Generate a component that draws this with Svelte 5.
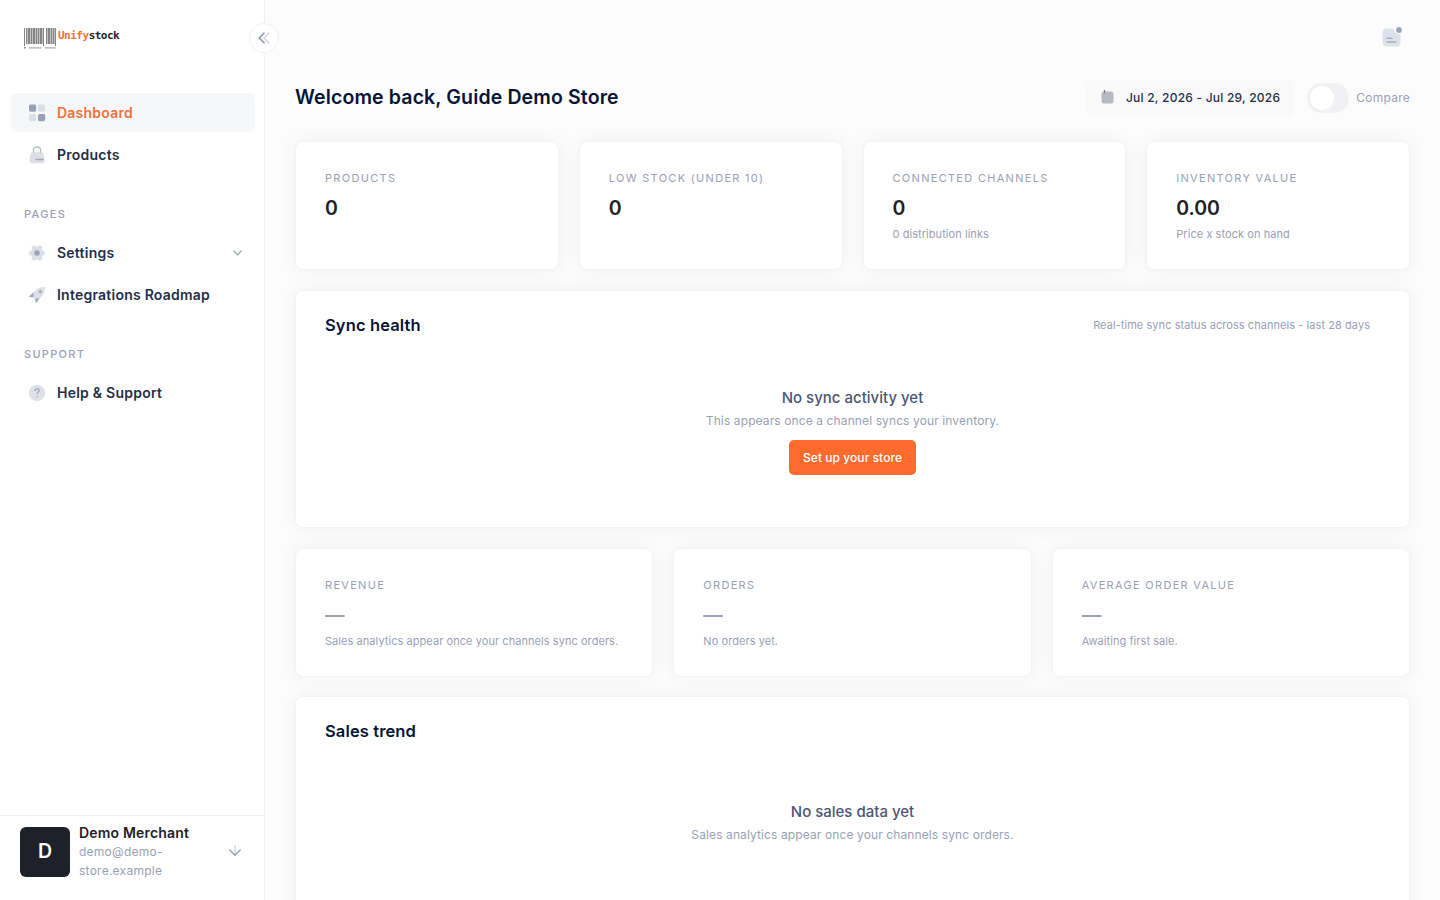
<script lang="ts">
    const menu = [
        {
            heading: "",
            items: [
                { label: "Dashboard", icon: "grid", active: true },
                { label: "Products", icon: "lock" },
            ],
        },
        {
            heading: "Pages",
            items: [
                { label: "Settings", icon: "gear", expandable: true },
                { label: "Integrations Roadmap", icon: "rocket" },
            ],
        },
        {
            heading: "Support",
            items: [{ label: "Help & Support", icon: "help" }],
        },
    ];

    const stats = [
        { label: "Products", value: "0", note: "" },
        { label: "Low stock (under 10)", value: "0", note: "" },
        { label: "Connected channels", value: "0", note: "0 distribution links" },
        { label: "Inventory value", value: "0.00", note: "Price x stock on hand" },
    ];

    const sales = [
        { label: "Revenue", note: "Sales analytics appear once your channels sync orders." },
        { label: "Orders", note: "No orders yet." },
        { label: "Average order value", note: "Awaiting first sale." },
    ];

    // x offset and width of each bar in the logo
    const bars = [
        [0, 1], [2, 1.5], [4, 2.5], [7, 1.5], [9, 2.5], [12, 1.5], [14, 1.5], [16, 2.5],
        [19, 1], [22, 1.5], [24, 2.5], [27, 1.5], [29, 1.5], [31, 1],
    ];

    let compare = false;
</script>

<div class="layout">
    <aside class="sidebar">
        <div class="logo">
            <svg width="34" height="22" viewBox="0 0 34 22" fill="#858588">
                {#each bars as [x, w], i}
                    <rect {x} y="0" width={w} height={i === 0 || i === 8 || i === 13 ? 18 : 16} />
                {/each}
                <g fill="#929295">
                    <rect x="0" y="19" width="2" height="1.5" />
                    <path d="M5 19.8h12M21 19.8h11" stroke="#929295" stroke-width="1.3" stroke-dasharray="1.5 .6" />
                </g>
            </svg>
            <span class="wordmark"><span>Unify</span>stock</span>
        </div>

        <button class="collapse" aria-label="Collapse sidebar">
            <svg width="12" height="12" viewBox="0 0 12 12" fill="none" stroke-width="1.6" stroke-linecap="round" stroke-linejoin="round">
                <path d="M10.7 1.2 6 6l4.7 4.8" stroke="#d8dae5" />
                <path d="M6 1.2 1.2 6 6 10.8" stroke="#8e92ad" />
            </svg>
        </button>

        <nav>
            {#each menu as group}
                {#if group.heading}
                    <div class="heading">{group.heading}</div>
                {/if}
                {#each group.items as item}
                    <a href="#{item.icon}" class="item" class:active={item.active}>
                        <svg width="18" height="18" viewBox="0 0 18 18">
                            {#if item.icon === "grid"}
                                <rect x="1" y="0.5" width="7.2" height="7.2" rx="1.6" fill="#99a1b7" />
                                <rect x="10" y="0.5" width="7.2" height="7.2" rx="1.6" fill="#dcdfe7" />
                                <rect x="1" y="10" width="7.2" height="7.2" rx="1.6" fill="#dcdfe7" />
                                <rect x="10" y="10" width="7.2" height="7.2" rx="1.6" fill="#99a1b7" />
                            {:else if item.icon === "lock"}
                                <path d="M4.6 6.2h8.8q1.6 0 2 1.8l1.1 6.2q.3 3-2.4 3H3.9q-2.7 0-2.4-3L2.6 8q.4-1.8 2-1.8z" fill="#dddfe6" />
                                <path d="M5.5 6.7V4q0-3 3.5-3t3.5 3v2.7" fill="none" stroke="#b5bac9" stroke-width="1.3" />
                                <path d="M7.8 13.5h7.5" stroke="#a3a9bc" stroke-width="1.3" stroke-linecap="round" />
                            {:else if item.icon === "gear"}
                                <g fill="#dddfe7">
                                    <circle cx="9" cy="9" r="6" />
                                    <circle cx="3.6" cy="9" r="2.6" />
                                    <circle cx="14.4" cy="9" r="2.6" />
                                    <circle cx="6.2" cy="4" r="2.6" />
                                    <circle cx="11.8" cy="4" r="2.6" />
                                    <circle cx="6.2" cy="14" r="2.6" />
                                    <circle cx="11.8" cy="14" r="2.6" />
                                </g>
                                <circle cx="9" cy="9" r="2.8" fill="#9ba3bd" />
                            {:else if item.icon === "rocket"}
                                <path d="M16.8 1.1Q9 .7 5.2 7.2l-.7 3.2 3.1 3.1 3.1-.7q6.5-3.8 6.1-11.7z" fill="#dcdfe6" />
                                <path d="m5.6 6.2-5 4.5 5 .7zM11.8 12.2l-3.8 5.2-1-4.8z" fill="#a5acbd" />
                                <circle cx="12.2" cy="5.8" r="1.8" fill="#a5b0b8" />
                            {:else}
                                <circle cx="9" cy="9" r="8.2" fill="#dfe1e9" />
                                <path d="M6.9 7q.1-2.2 2.2-2.2 2 0 2 1.8c0 1.5-2 1.6-2 3.5" fill="none" stroke="#9da4bd" stroke-width="1.2" />
                                <circle cx="9.1" cy="12.7" r=".8" fill="#9da4bd" />
                            {/if}
                        </svg>
                        <span>{item.label}</span>
                        {#if item.expandable}
                            <svg class="chevron" width="9" height="6" viewBox="0 0 9 6" fill="none" stroke="#99a1b7" stroke-width="1.2" stroke-linecap="round" stroke-linejoin="round">
                                <path d="m.8 1 3.7 3.8L8.2 1" />
                            </svg>
                        {/if}
                    </a>
                {/each}
            {/each}
        </nav>

        <div class="user">
            <div class="avatar">D</div>
            <div class="who">
                <strong>Demo Merchant</strong>
                <span>demo@demo-store.example</span>
            </div>
            <svg width="12" height="12" viewBox="0 0 12 12" fill="none" stroke-linecap="round" stroke-linejoin="round">
                <path d="M6 .5v9" stroke="#d3d7e1" stroke-width="1.4" />
                <path d="m.8 5 5.2 5.3L11.2 5" stroke="#99a1b7" stroke-width="1.5" />
            </svg>
        </div>
    </aside>

    <main>
        <header>
            <svg width="20" height="22" viewBox="0 0 20 22">
                <path d="M5 2.5h6.5q.5 5.2 7 5.7V16q0 4.5-4.5 4.5H5Q.5 20.5.5 16V7Q.5 2.5 5 2.5z" fill="#dfe1ea" />
                <path d="M5 12.3h5M5 16h9" stroke="#a9aec2" stroke-width="1.5" stroke-linecap="round" />
                <circle cx="17" cy="4" r="2.9" fill="#9ba3c0" />
            </svg>
        </header>

        <div class="toolbar">
            <h1>Welcome back, Guide Demo Store</h1>
            <button class="range">
                <svg width="13" height="14" viewBox="0 0 13 14">
                    <rect x=".5" y="1.5" width="12" height="12" rx="2.5" fill="#b7b8c3" />
                    <path d="M3.5.5v2" stroke="#777985" stroke-width="1.3" stroke-linecap="round" />
                </svg>
                Jul 2, 2026 - Jul 29, 2026
            </button>
            <label class="compare">
                <input type="checkbox" bind:checked={compare} />
                <span class="switch"></span>
                Compare
            </label>
        </div>

        <div class="row four">
            {#each stats as s}
                <section class="card stat">
                    <div class="label">{s.label}</div>
                    <div class="value">{s.value}</div>
                    {#if s.note}
                        <div class="note">{s.note}</div>
                    {/if}
                </section>
            {/each}
        </div>

        <section class="card panel">
            <div class="panel-head">
                <h2>Sync health</h2>
                <span class="note">Real-time sync status across channels - last 28 days</span>
            </div>
            <div class="empty">
                <h3>No sync activity yet</h3>
                <p>This appears once a channel syncs your inventory.</p>
                <button class="primary">Set up your store</button>
            </div>
        </section>

        <div class="row three">
            {#each sales as s}
                <section class="card stat">
                    <div class="label">{s.label}</div>
                    <div class="value none">—</div>
                    <div class="note">{s.note}</div>
                </section>
            {/each}
        </div>

        <section class="card panel trend">
            <div class="panel-head">
                <h2>Sales trend</h2>
            </div>
            <div class="empty">
                <h3>No sales data yet</h3>
                <p>Sales analytics appear once your channels sync orders.</p>
            </div>
        </section>
    </main>
</div>

<style>
    :global(body) {
        margin: 0;
        overflow: hidden;
    }

    * {
        box-sizing: border-box;
    }

    h1,
    h2,
    h3,
    p {
        margin: 0;
    }

    button {
        border: 0;
        font: inherit;
        padding: 0;
    }

    .layout {
        display: flex;
        height: 100vh;
        background: #fcfcfc;
        font-family: Inter, "Liberation Sans", sans-serif;
        font-size: 13px;
        line-height: 1.5;
        color: #071437;
    }

    .sidebar {
        position: relative;
        display: flex;
        flex-direction: column;
        flex: none;
        width: 265px;
        background: #fff;
        border-right: 1px solid #f1f1f4;
    }

    .logo {
        display: flex;
        height: 93px;
        padding: 28px 0 0 24px;
    }

    .wordmark {
        font: bold 11px/15px "DejaVu Sans Mono", monospace;
        letter-spacing: -0.5px;
        color: #252527;
    }

    .wordmark span {
        color: #f2733b;
    }

    .collapse {
        position: absolute;
        top: 23px;
        right: -15px;
        display: grid;
        place-items: center;
        width: 30px;
        height: 30px;
        border: 1px solid #f1f1f4;
        border-radius: 50%;
        background: #fff;
    }

    nav {
        flex: 1;
        padding: 0 9px 0 11px;
    }

    .item {
        display: flex;
        align-items: center;
        height: 39px;
        margin-bottom: 3px;
        padding: 0 13px 0 17px;
        border-radius: 6px;
        font-size: 14px;
        font-weight: 600;
        letter-spacing: 0.23px;
        color: #252f4a;
        text-decoration: none;
    }

    .item span {
        flex: 1;
        margin-left: 11px;
    }

    .item.active {
        background: #f6f7f9;
        color: #f1703c;
    }

    .heading {
        height: 56px;
        padding: 29px 0 0 13px;
        font-size: 11px;
        font-weight: 500;
        letter-spacing: 1.3px;
        line-height: 17px;
        text-transform: uppercase;
        color: #99a1b7;
    }

    .user {
        display: flex;
        align-items: center;
        height: 85px;
        padding: 0 23px 12px 20px;
        border-top: 1px solid #f1f1f4;
    }

    .avatar {
        display: grid;
        place-items: center;
        width: 50px;
        height: 50px;
        border-radius: 6px;
        background: #1e2129;
        font-size: 19.5px;
        font-weight: 600;
        color: #fff;
    }

    .who {
        flex: 1;
        width: 0;
        margin: -1px 0 0 9px;
        line-height: 19px;
    }

    .who strong {
        display: block;
        font-size: 14px;
        font-weight: 600;
        letter-spacing: 0.18px;
        color: #1e2129;
    }

    .who span {
        display: block;
        width: 110px;
        font-size: 12px;
        letter-spacing: 0.25px;
        color: #99a1b7;
    }

    .user svg {
        margin-top: -2px;
    }

    main {
        flex: 1;
        min-width: 0;
        padding: 0 30px;
    }

    header {
        display: flex;
        justify-content: flex-end;
        height: 79px;
        padding: 26px 8px 0 0;
    }

    .toolbar {
        display: flex;
        align-items: center;
        height: 38px;
        margin-bottom: 24px;
    }

    h1 {
        flex: 1;
        font-size: 19.5px;
        font-weight: 600;
        letter-spacing: 0.13px;
        line-height: 1.2;
    }

    .range {
        display: flex;
        align-items: center;
        gap: 12px;
        height: 36px;
        padding: 0 15px;
        border-radius: 6px;
        background: #f9f9f9;
        font-size: 12px;
        font-weight: 500;
        letter-spacing: 0.23px;
        color: #252f4a;
    }

    .range svg {
        margin-top: -3px;
    }

    .compare {
        display: flex;
        align-items: center;
        margin-left: 12px;
        font-size: 12px;
        letter-spacing: 0.25px;
        color: #99a1b7;
    }

    .compare input {
        display: none;
    }

    .switch {
        width: 42px;
        height: 30px;
        margin-right: 7px;
        padding: 3px;
        border-radius: 15px;
        background: #f1f1f4;
    }

    .switch::before {
        content: "";
        display: block;
        width: 24px;
        height: 24px;
        border-radius: 50%;
        background: #fff;
    }

    input:checked + .switch::before {
        margin-left: auto;
    }

    .row {
        display: grid;
        gap: 20px;
        margin-bottom: 20px;
    }

    .four {
        grid-template-columns: repeat(4, 1fr);
    }

    .three {
        grid-template-columns: repeat(3, 1fr);
    }

    .card {
        border: 1px solid #f3f3f3;
        border-radius: 8px;
        background: #fff;
        box-shadow: 0 0 20px rgba(0, 0, 0, 0.05);
    }

    .stat {
        height: 129px;
        padding: 26px 29px 0;
    }

    .label {
        margin-bottom: 5px;
        font-size: 11px;
        letter-spacing: 1.3px;
        line-height: 20px;
        text-transform: uppercase;
        color: #99a1b7;
    }

    .value {
        height: 30px;
        font-size: 19.5px;
        font-weight: 600;
        line-height: 31px;
        color: #1e2129;
    }

    .value.none {
        line-height: 30px;
        color: #99a1b7;
    }

    .note {
        font-size: 11px;
        letter-spacing: 0.06px;
        line-height: 22px;
        color: #99a1b7;
    }

    .panel {
        height: 238px;
        margin-bottom: 20px;
        padding: 0 39px 0 29px;
    }

    .panel-head {
        display: flex;
        align-items: center;
        justify-content: space-between;
        height: 69px;
    }

    .panel-head .note {
        margin-top: -1px;
    }

    h2 {
        font-size: 16.5px;
        font-weight: 600;
        letter-spacing: 0.12px;
    }

    .empty {
        display: flex;
        flex-direction: column;
        align-items: center;
        padding: 26px 0 0 10px;
    }

    .trend {
        margin-top: -1px;
    }

    .trend .empty {
        padding-top: 34px;
    }

    h3 {
        font-size: 15px;
        font-weight: 500;
        line-height: 23px;
        color: #4b5675;
    }

    .empty p {
        font-size: 12px;
        letter-spacing: 0.11px;
        line-height: 24px;
        color: #99a1b7;
    }

    .primary {
        height: 35px;
        margin-top: 7px;
        padding: 0 13.5px;
        border-radius: 5px;
        background: #ff6b2c;
        font-size: 12px;
        font-weight: 500;
        letter-spacing: 0.06px;
        color: #fff;
    }
</style>
